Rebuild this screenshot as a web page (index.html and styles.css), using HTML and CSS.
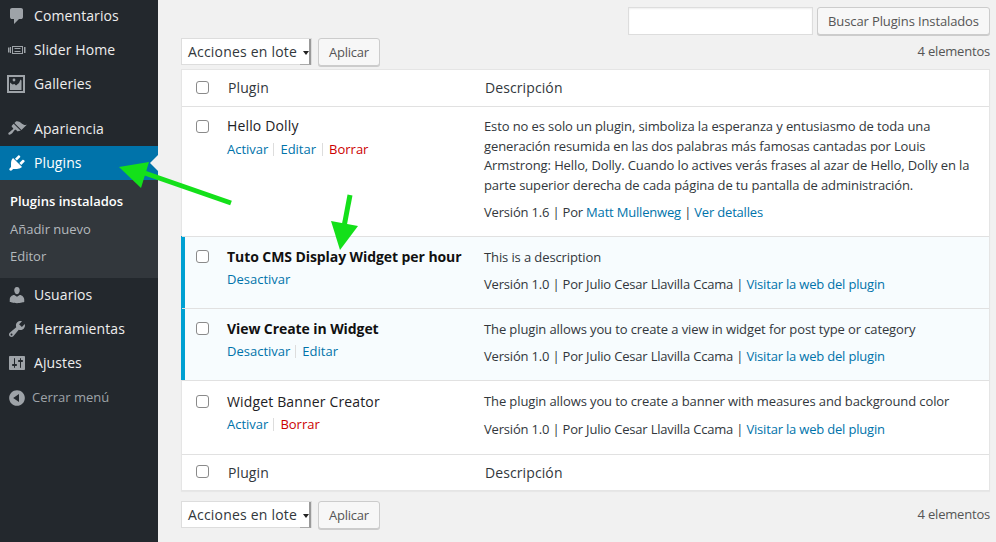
FILE: index.html
```html
<!DOCTYPE html>
<html lang="es">
<head>
<meta charset="utf-8">
<title>Plugins</title>
<link rel="stylesheet" href="styles.css">
</head>
<body>
<div class="page">
<nav class="sidebar">
  <ul class="menu">
    <li class="item"><svg class="icon" viewBox="0 0 20 20"><path d="M5 2h9q.82 0 1.41.59T16 4v7q0 .82-.59 1.41T14 13h-2l-5 5v-5H5q-.82 0-1.41-.59T3 11V4q0-.82.59-1.41T5 2z"/></svg><span>Comentarios</span></li>
    <li class="item"><svg class="icon" viewBox="0 0 20 20"><path fill-rule="evenodd" d="M5 6h11v8H5V6zm1 1v6h9V7H6zm1.5 1h6v1h-6V8zm0 3h6v1h-6v-1zM1 7.5h1.5v5H1v-5zM3 7h1v6H3V7zM17 7h1.5v6H17V7z"/></svg><span>Slider Home</span></li>
    <li class="item"><svg class="icon" viewBox="0 0 20 20"><path fill-rule="evenodd" d="M0 1h18v18H0V1zm2 2v14h14V3H2zm1 13V8.5l2.5 2 2-.5 1.5 1.5 3-2.5 1.5-3.5 1 1V16H3zM7 4.6a1.4 1.4 0 1 1 0 2.8 1.4 1.4 0 0 1 0-2.8z"/></svg><span>Galleries</span></li>
    <li class="item item-gap"><svg class="icon" viewBox="0 0 20 20"><path d="M14.48 11.06L7.41 3.99l1.5-1.5c.5-.56 2.3-.47 3.51.32 1.21.8 1.43 1.28 2.91 2.1 1.18.64 2.45 1.26 4.45.85zm-.71.71L6.7 4.7 4.93 6.47c-.39.39-.39 1.02 0 1.41l1.06 1.06c.39.39.39 1.03 0 1.42-.6.6-1.43 1.11-2.21 1.69-.35.26-.7.53-1.01.84C1.43 13.23.91 14.65 1.65 15.39s2.16.22 3.5-1.12c.31-.31.58-.66.84-1.01.58-.78 1.09-1.61 1.69-2.21.39-.39 1.03-.39 1.42 0l1.06 1.06c.39.39 1.02.39 1.41 0z"/></svg><span>Apariencia</span></li>
    <li class="item item-current"><svg class="icon" viewBox="0 0 20 20"><path d="M13.11 4.36L9.87 7.6 8 5.73l3.24-3.24c.35-.34 1.05-.2 1.56.32.52.51.66 1.21.31 1.55zm-8 1.77l.91-1.12 9.01 9.01-1.19.84c-.71.71-2.63 1.16-3.82 1.16H6.14L4.9 17.26c-.59.59-1.54.59-2.12 0-.59-.58-.59-1.53 0-2.12l1.24-1.24v-3.88c0-1.13.4-3.19 1.09-3.89zm7.26 3.97l3.24-3.24c.34-.35 1.04-.21 1.55.31.52.51.66 1.21.31 1.55l-3.24 3.25z"/></svg><span>Plugins</span></li>
    <li class="submenu">
      <a class="sub-link sub-current">Plugins instalados</a>
      <a class="sub-link">Añadir nuevo</a>
      <a class="sub-link">Editor</a>
    </li>
    <li class="item"><svg class="icon" viewBox="0 0 20 20"><path d="M10 9.25c-2.27 0-2.73-3.44-2.73-3.44C7 4.02 7.82 2 9.97 2c2.16 0 2.98 2.02 2.71 3.81 0 0-.41 3.44-2.68 3.44zm0 2.57L12.72 10c2.39 0 4.52 2.33 4.52 4.53v2.49s-3.65 1.13-7.24 1.13c-3.65 0-7.24-1.13-7.24-1.13v-2.49c0-2.25 1.94-4.53 4.47-4.53z"/></svg><span>Usuarios</span></li>
    <li class="item"><svg class="icon" viewBox="0 0 20 20"><path d="M16.68 9.77c-1.34 1.34-3.3 1.67-4.95.99l-5.41 6.52c-.99.99-2.59.99-3.58 0s-.99-2.59 0-3.57l6.52-5.42c-.68-1.65-.35-3.61.99-4.95 1.28-1.28 3.12-1.62 4.72-1.06l-2.89 2.89 2.82 2.82 2.86-2.87c.53 1.58.18 3.39-1.08 4.65zM3.81 16.21c.4.39 1.04.39 1.43 0 .4-.4.4-1.04 0-1.43-.39-.4-1.03-.4-1.43 0-.39.39-.39 1.03 0 1.43z"/></svg><span>Herramientas</span></li>
    <li class="item"><svg class="icon" viewBox="0 0 20 20"><path fill-rule="evenodd" d="M18 16V4c0-.55-.45-1-1-1H3c-.55 0-1 .45-1 1v12c0 .55.45 1 1 1h14c.55 0 1-.45 1-1zM8 11h1c.55 0 1 .45 1 1s-.45 1-1 1H8v1.5c0 .28-.22.5-.5.5s-.5-.22-.5-.5V13H6c-.55 0-1-.45-1-1s.45-1 1-1h1V5.5c0-.28.22-.5.5-.5s.5.22.5.5V11zm5-2h-1c-.55 0-1-.45-1-1s.45-1 1-1h1V5.5c0-.28.22-.5.5-.5s.5.22.5.5V7h1c.55 0 1 .45 1 1s-.45 1-1 1h-1v5.5c0 .28-.22.5-.5.5s-.5-.22-.5-.5V9z"/></svg><span>Ajustes</span></li>
    <li class="item item-collapse"><svg class="icon" viewBox="0 0 20 20"><path fill-rule="evenodd" d="M10 2.16c4.33 0 7.84 3.51 7.84 7.84s-3.51 7.84-7.84 7.84S2.16 14.33 2.16 10 5.71 2.16 10 2.16zm2 11.72V6.12L6.18 9.97z"/></svg><span>Cerrar menú</span></li>
  </ul>
</nav>
<main class="main">
  <form class="search">
    <input class="search-input" type="text" aria-label="Buscar">
    <button class="button search-button" type="button">Buscar Plugins Instalados</button>
  </form>
  <div class="tablenav tablenav-top">
    <div class="bulk"><span class="select">Acciones en lote</span></div>
    <button class="button apply" type="button">Aplicar</button>
    <span class="count">4 elementos</span>
  </div>
  <table class="plugins">
    <colgroup><col class="col-check"><col class="col-name"><col></colgroup>
    <thead>
      <tr><th class="check"><input class="cb" type="checkbox"></th><th class="head">Plugin</th><th class="head">Descripción</th></tr>
    </thead>
    <tbody>
      <tr class="first">
        <td class="check"><input class="cb" type="checkbox"></td>
        <td class="name"><div class="title">Hello Dolly</div>
          <div class="actions"><a class="act">Activar</a><a class="act">Editar</a><a class="act del">Borrar</a></div></td>
        <td class="desc"><p class="text">Esto no es solo un plugin, simboliza la esperanza y entusiasmo de toda una generación resumida en las dos palabras más famosas cantadas por Louis Armstrong: Hello, Dolly. Cuando lo actives verás frases al azar de Hello, Dolly en la parte superior derecha de cada página de tu pantalla de administración.</p>
          <p class="meta">Versión 1.6 | Por <a class="link">Matt Mullenweg</a> | <a class="link">Ver detalles</a></p></td>
      </tr>
      <tr class="active">
        <td class="check"><input class="cb" type="checkbox"></td>
        <td class="name"><div class="title">Tuto CMS Display Widget per hour</div>
          <div class="actions"><a class="act">Desactivar</a></div></td>
        <td class="desc"><p class="text">This is a description</p>
          <p class="meta">Versión 1.0 | Por Julio Cesar Llavilla Ccama | <a class="link">Visitar la web del plugin</a></p></td>
      </tr>
      <tr class="active">
        <td class="check"><input class="cb" type="checkbox"></td>
        <td class="name"><div class="title">View Create in Widget</div>
          <div class="actions"><a class="act">Desactivar</a><a class="act">Editar</a></div></td>
        <td class="desc"><p class="text">The plugin allows you to create a view in widget for post type or category</p>
          <p class="meta">Versión 1.0 | Por Julio Cesar Llavilla Ccama | <a class="link">Visitar la web del plugin</a></p></td>
      </tr>
      <tr class="roomy">
        <td class="check"><input class="cb" type="checkbox"></td>
        <td class="name"><div class="title">Widget Banner Creator</div>
          <div class="actions"><a class="act">Activar</a><a class="act del">Borrar</a></div></td>
        <td class="desc"><p class="text">The plugin allows you to create a banner with measures and background color</p>
          <p class="meta">Versión 1.0 | Por Julio Cesar Llavilla Ccama | <a class="link">Visitar la web del plugin</a></p></td>
      </tr>
    </tbody>
    <tfoot>
      <tr><th class="check"><input class="cb" type="checkbox"></th><th class="head">Plugin</th><th class="head">Descripción</th></tr>
    </tfoot>
  </table>
  <div class="tablenav tablenav-bottom">
    <div class="bulk"><span class="select">Acciones en lote</span></div>
    <button class="button apply" type="button">Aplicar</button>
    <span class="count">4 elementos</span>
  </div>
</main>
<svg class="arrows" viewBox="0 0 996 542" aria-hidden="true">
  <path class="arrow-line" d="M231 203L136 170"/>
  <path class="arrow-head" d="M119 167L149 162L141 188Z"/>
  <path class="arrow-line" d="M350 195L343 232"/>
  <path class="arrow-head" d="M340 250L331 221L358 226Z"/>
</svg>
</div>
</body>
</html>
```

FILE: styles.css
```css
* { box-sizing: border-box; }
html, body { margin: 0; height: 100%; overflow: hidden; }
body {
  background: #f1f1f1;
  color: #444;
  font-family: "Open Sans", sans-serif;
  font-size: 13px;
  line-height: 19.5px;
}
.page { position: relative; display: flex; width: 996px; height: 542px; overflow: hidden; }

.sidebar { flex: 0 0 158px; background: #23282d; }
.menu { list-style: none; margin: -1px 0 0; padding: 0; }
.item {
  position: relative;
  display: flex;
  align-items: center;
  gap: 7px;
  height: 34px;
  padding-left: 7px;
  color: #eee;
  font-size: 14px;
  letter-spacing: .1px;
}
.icon { flex: 0 0 20px; width: 20px; height: 20px; fill: #9ea3a8; }
.item-gap { margin-top: 11px; }
.item-current { background: #0073aa; color: #fff; }
.item-current .icon { fill: #fff; }
.item-current::after {
  content: "";
  position: absolute;
  right: 0;
  top: 9px;
  border: 8px solid transparent;
  border-right-color: #f1f1f1;
  border-left-width: 0;
}
.item-collapse { gap: 5px; padding-top: 1px; color: #9ea3a8; font-size: 13px; letter-spacing: 0; }
.submenu { display: flex; flex-direction: column; height: 98px; padding: 7px 0; background: #32373c; }
.sub-link { padding-left: 10px; height: 27.5px; line-height: 28px; color: #b4b9be; font-size: 13px; }
.sub-current { color: #fff; font-weight: 600; }

.main { flex: 1; min-width: 0; padding: 7px 6px 0 23px; }
.search { display: flex; justify-content: flex-end; gap: 4px; height: 28px; }
.search-input { width: 185px; height: 28px; background: #fff; border: 1px solid #ddd; box-shadow: inset 0 1px 2px rgba(0,0,0,.07); }
.button {
  height: 28px;
  padding: 0 0 1px;
  background: #f7f7f7;
  border: 1px solid #ccc;
  border-radius: 3px;
  box-shadow: 0 1px 0 #ccc;
  color: #555;
  font: 13px/26px "Open Sans", sans-serif;
}
.search-button { width: 173px; letter-spacing: -.12px; }
.apply { width: 62px; letter-spacing: -.25px; }
.tablenav { display: flex; align-items: center; gap: 6px; height: 27px; }
.tablenav-top { margin: 3px 0 4px; }
.tablenav-bottom { margin-top: 10px; }
.bulk { position: relative; width: 131px; height: 27px; background: #fff; border: 1px solid #ddd; }
.bulk::after {
  content: "";
  position: absolute;
  right: 0;
  top: 0;
  width: 9px;
  height: 25px;
  border-right: 2px solid #999;
  border-bottom: 1px solid #aaa;
}
.bulk::before {
  content: "";
  position: absolute;
  right: 2px;
  top: 12px;
  border: 3px solid transparent;
  border-top: 4px solid #222;
  border-bottom-width: 0;
}
.select { display: block; padding-left: 6px; color: #32373c; font-size: 14px; line-height: 25px; letter-spacing: .2px; }
.count { margin-left: auto; color: #555; letter-spacing: -.2px; }

.plugins {
  width: 809px;
  table-layout: fixed;
  border-collapse: separate;
  border-spacing: 0;
  background: #fff;
  border: 1px solid #e5e5e5;
  box-shadow: 0 1px 1px rgba(0,0,0,.04);
}
.col-check { width: 35px; }
.col-name { width: 257px; }
.plugins th { font-weight: 400; text-align: left; padding: 0 10px; vertical-align: middle; }
.plugins thead th { height: 37px; padding-bottom: 1px; border-bottom: 1px solid #e1e1e1; }
.plugins tfoot th { height: 36px; padding-top: 1px; border-top: 1px solid #e1e1e1; }
.plugins th.head { padding-left: 11px; color: #32373c; font-size: 14px; letter-spacing: .1px; }
.plugins td { padding: 10px 10px 14px; vertical-align: top; border-top: 1px solid #e1e1e1; }
.plugins td.desc { padding-top: 11px; }
.plugins tr.first td { border-top: 0; padding-top: 9px; }
.plugins tr.first td.desc { padding-top: 10px; padding-bottom: 13.5px; }
.plugins tr.roomy td { padding-top: 11px; padding-bottom: 15px; }
.plugins th.check { padding: 0 0 2px 14px; }
.plugins td.check { padding: 13px 0 0 14px; }
.plugins tr.first td.check { padding-top: 13px; }
.plugins tr.roomy td.check { padding-top: 14px; }
.active td { background: #f7fcfe; }
.active .check { box-shadow: -1px 0 0 #00a0d2, inset 3px 0 0 #00a0d2; }
.cb {
  appearance: none;
  display: block;
  width: 13px;
  height: 13px;
  margin: 0;
  background: #fff;
  border: 1px solid #8a8a8a;
  border-radius: 3px;
}
.title { color: #1d2125; font-size: 14px; margin-bottom: 3px; letter-spacing: .15px; }
.first .title { margin-bottom: 4px; }
.active .title { color: #111; font-weight: 700; letter-spacing: -.08px; }
.actions { display: flex; }
.act { color: #0073aa; padding: 0 6px; border-left: 1px solid #ddd; line-height: 13px; margin: 3px 0; }
.act:first-child { padding-left: 0; padding-right: 5px; border-left: 0; }
.del { color: #c00; }
.text { margin: 0 0 7px; color: #32373c; letter-spacing: -.11px; }
.first .text, .roomy .text { margin-bottom: 8px; }
.meta { margin: 0; color: #32373c; letter-spacing: -.19px; }
.link { color: #0073aa; }

.arrows { position: absolute; left: 0; top: 0; width: 996px; height: 542px; pointer-events: none; }
.arrow-line { fill: none; stroke: #14e01a; stroke-width: 5; }
.arrow-head { fill: #14e01a; }
```
